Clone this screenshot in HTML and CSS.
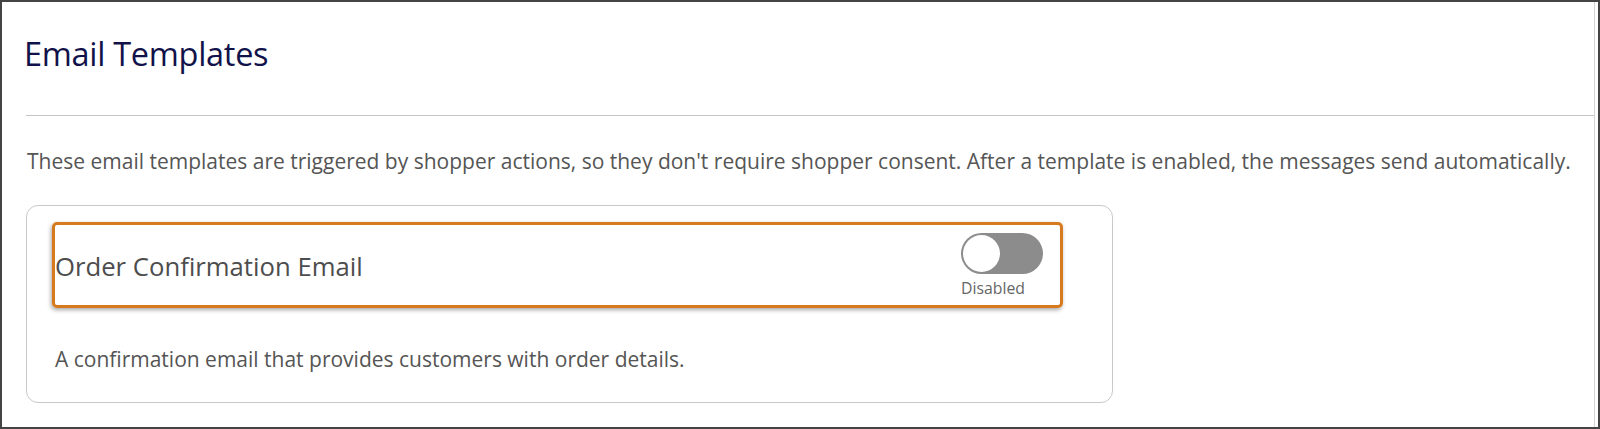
FILE: index.html
```html
<!DOCTYPE html>
<html lang="en">
<head>
<meta charset="utf-8">
<title>Email Templates</title>
<link rel="stylesheet" href="styles.css">
</head>
<body>
<div class="frame">
  <div class="page">
    <h1 class="title">Email Templates</h1>
    <div class="rule"></div>
    <p class="intro">These email templates are triggered by shopper actions, so they don't require shopper consent. After a template is enabled, the messages send automatically.</p>
    <div class="card">
      <div class="highlight">
        <div class="tpl-name">Order Confirmation Email</div>
        <div class="switch-col">
          <div class="switch"><span class="knob"></span></div>
          <div class="switch-label">Disabled</div>
        </div>
      </div>
      <p class="tpl-desc">A confirmation email that provides customers with order details.</p>
    </div>
  </div>
</div>
</body>
</html>
```
FILE: styles.css
```css
* { box-sizing: border-box; }
html, body { margin: 0; padding: 0; background: #fff; }
body { font-family: "Open Sans", "Noto Sans", sans-serif; }

.frame {
  width: 1600px;
  height: 429px;
  border: 2px solid #444;
  background: #fff;
  overflow: hidden;
}

.page {
  width: 1593px;
  height: 100%;
  border-right: 1px solid #d4d4d4;
  padding: 31px 0 0 24px;
}

.title {
  margin: 0 0 0 -2px;
  font-size: 32.5px;
  line-height: 41px;
  font-weight: 400;
  letter-spacing: -0.3px;
  color: #12124a;
}

.rule {
  margin-top: 41px;
  height: 1px;
  background: #c4c4c4;
}

.intro {
  margin: 31px 0 0 1px;
  font-size: 21px;
  line-height: 28px;
  color: #555;
  white-space: nowrap;
}

.card {
  margin-top: 30px;
  width: 1087px;
  border: 1px solid #c9c9c9;
  border-radius: 12px;
  padding: 16px 49px 29px 25px;
}

.highlight {
  height: 86px;
  border: 3px solid #d67a1f;
  border-radius: 5px;
  box-shadow: -1px 2px 4px rgba(0, 0, 0, 0.35);
  display: flex;
  justify-content: space-between;
  align-items: flex-start;
  padding: 8px 17px 0 0;
}

.tpl-name {
  margin-top: 17px;
  font-size: 25.7px;
  line-height: 34px;
  color: #4d4d4d;
}

.switch-col {
  width: 82px;
  display: flex;
  flex-direction: column;
}

.switch {
  width: 82px;
  height: 41px;
  border-radius: 21px;
  background: #8c8c8c;
  padding: 2px;
  display: flex;
  align-items: center;
}

.knob {
  width: 37px;
  height: 37px;
  border-radius: 50%;
  background: #fff;
}

.switch-label {
  margin-top: 4px;
  font-size: 15.8px;
  line-height: 20px;
  color: #666;
}

.tpl-desc {
  margin: 36.5px 0 0 3px;
  font-size: 21px;
  line-height: 28px;
  color: #555;
  white-space: nowrap;
}
```
